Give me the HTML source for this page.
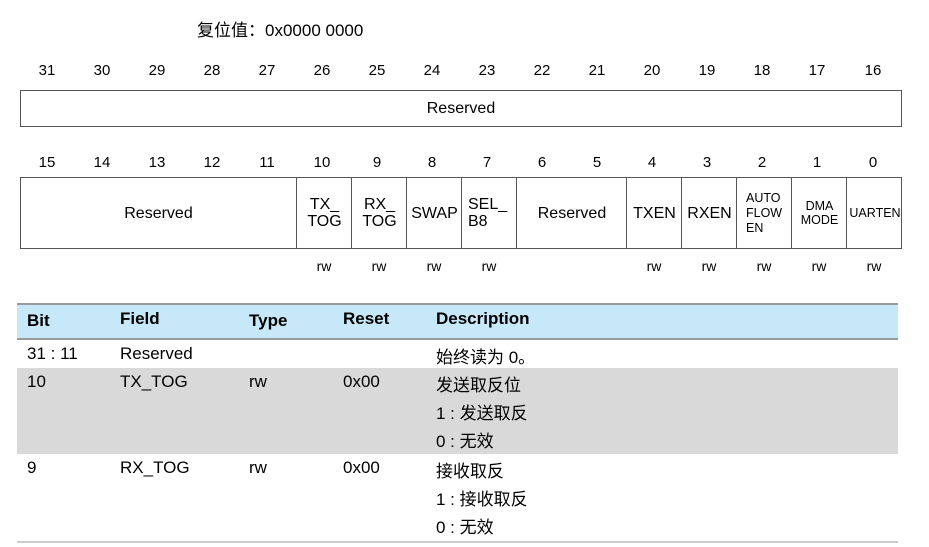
<!DOCTYPE html>
<html><head><meta charset="utf-8"><style>
body{margin:0;width:929px;height:547px;background:#fff;position:relative;font-family:"Liberation Sans","Noto Sans CJK SC",sans-serif;color:#000;overflow:hidden}
.a{position:absolute;white-space:nowrap}
.n{position:absolute;font-size:15px;width:40px;text-align:center;transform:translateX(-20px)}
.box{position:absolute;border:1px solid #555;box-sizing:border-box}
.c{position:absolute;top:0;bottom:0;border-left:1px solid #555;display:flex;align-items:center;justify-content:center;text-align:center;font-size:16px;line-height:17px}
.rw{position:absolute;top:258px;font-size:14px;width:40px;text-align:center;transform:translateX(-20px)}
.t{position:absolute;font-size:17px;white-space:nowrap}
</style></head><body>
<div class="a" style="left:197px;top:16px;font-size:17px">复位值：0x0000 0000</div>

<div class="box" style="left:20px;top:90px;width:882px;height:37px"><div class="c" style="left:0;right:0;border:none">Reserved</div></div>

<div class="box" style="left:20px;top:177px;width:882px;height:72px">
<div class="c" style="left:0;width:275px;border:none">Reserved</div>
<div class="c" style="left:275px;width:55px">TX_<br>TOG</div>
<div class="c" style="left:330px;width:55px">RX_<br>TOG</div>
<div class="c" style="left:385px;width:55px">SWAP</div>
<div class="c" style="left:440px;width:55px;justify-content:flex-start;padding-left:6px;text-align:left;box-sizing:border-box">SEL_<br>B8</div>
<div class="c" style="left:495px;width:110px">Reserved</div>
<div class="c" style="left:605px;width:55px">TXEN</div>
<div class="c" style="left:660px;width:55px">RXEN</div>
<div class="c" style="left:715px;width:55px;font-size:12.5px;line-height:15px;text-align:left;justify-content:flex-start;padding-left:9px;box-sizing:border-box">AUTO<br>FLOW<br>EN</div>
<div class="c" style="left:770px;width:55px;font-size:12.5px;line-height:14px">DMA<br>MODE</div>
<div class="c" style="left:825px;width:56px;font-size:12.5px">UARTEN</div>
</div>

<div class="n" style="left:47px;top:62px">31</div><div class="n" style="left:102px;top:62px">30</div><div class="n" style="left:157px;top:62px">29</div><div class="n" style="left:212px;top:62px">28</div><div class="n" style="left:267px;top:62px">27</div><div class="n" style="left:322px;top:62px">26</div><div class="n" style="left:377px;top:62px">25</div><div class="n" style="left:432px;top:62px">24</div><div class="n" style="left:487px;top:62px">23</div><div class="n" style="left:542px;top:62px">22</div><div class="n" style="left:597px;top:62px">21</div><div class="n" style="left:652px;top:62px">20</div><div class="n" style="left:707px;top:62px">19</div><div class="n" style="left:762px;top:62px">18</div><div class="n" style="left:817px;top:62px">17</div><div class="n" style="left:873px;top:62px">16</div>
<div class="n" style="left:47px;top:154px">15</div><div class="n" style="left:102px;top:154px">14</div><div class="n" style="left:157px;top:154px">13</div><div class="n" style="left:212px;top:154px">12</div><div class="n" style="left:267px;top:154px">11</div><div class="n" style="left:322px;top:154px">10</div><div class="n" style="left:377px;top:154px">9</div><div class="n" style="left:432px;top:154px">8</div><div class="n" style="left:487px;top:154px">7</div><div class="n" style="left:542px;top:154px">6</div><div class="n" style="left:597px;top:154px">5</div><div class="n" style="left:652px;top:154px">4</div><div class="n" style="left:707px;top:154px">3</div><div class="n" style="left:762px;top:154px">2</div><div class="n" style="left:817px;top:154px">1</div><div class="n" style="left:873px;top:154px">0</div>

<div class="rw" style="left:324px">rw</div><div class="rw" style="left:379px">rw</div><div class="rw" style="left:434px">rw</div><div class="rw" style="left:489px">rw</div><div class="rw" style="left:654px">rw</div><div class="rw" style="left:709px">rw</div><div class="rw" style="left:764px">rw</div><div class="rw" style="left:819px">rw</div><div class="rw" style="left:874px">rw</div>

<div class="a" style="left:17px;top:303px;width:881px;height:2px;background:#999"></div>
<div class="a" style="left:17px;top:305px;width:881px;height:33px;background:#c6e8f8"></div>
<div class="a" style="left:17px;top:338px;width:881px;height:2px;background:#999"></div>
<div class="a" style="left:17px;top:368px;width:881px;height:86px;background:#d9d9d9"></div>
<div class="a" style="left:17px;top:541px;width:881px;height:2px;background:#ccc"></div>

<div class="t" style="left:27px;top:311px;font-weight:bold">Bit</div>
<div class="t" style="left:120px;top:309px;font-weight:bold">Field</div>
<div class="t" style="left:249px;top:311px;font-weight:bold">Type</div>
<div class="t" style="left:343px;top:309px;font-weight:bold">Reset</div>
<div class="t" style="left:436px;top:309px;font-weight:bold">Description</div>

<div class="t" style="left:27px;top:344px">31 : 11</div>
<div class="t" style="left:120px;top:344px">Reserved</div>
<div class="t" style="left:436px;top:343px">始终读为 0。</div>

<div class="t" style="left:27px;top:372px">10</div>
<div class="t" style="left:120px;top:372px">TX_TOG</div>
<div class="t" style="left:249px;top:372px">rw</div>
<div class="t" style="left:343px;top:372px">0x00</div>
<div class="t" style="left:436px;top:371px">发送取反位</div>
<div class="t" style="left:436px;top:399px">1 : 发送取反</div>
<div class="t" style="left:436px;top:427px">0 : 无效</div>

<div class="t" style="left:27px;top:458px">9</div>
<div class="t" style="left:120px;top:458px">RX_TOG</div>
<div class="t" style="left:249px;top:458px">rw</div>
<div class="t" style="left:343px;top:458px">0x00</div>
<div class="t" style="left:436px;top:457px">接收取反</div>
<div class="t" style="left:436px;top:485px">1 : 接收取反</div>
<div class="t" style="left:436px;top:513px">0 : 无效</div>
</body></html>
